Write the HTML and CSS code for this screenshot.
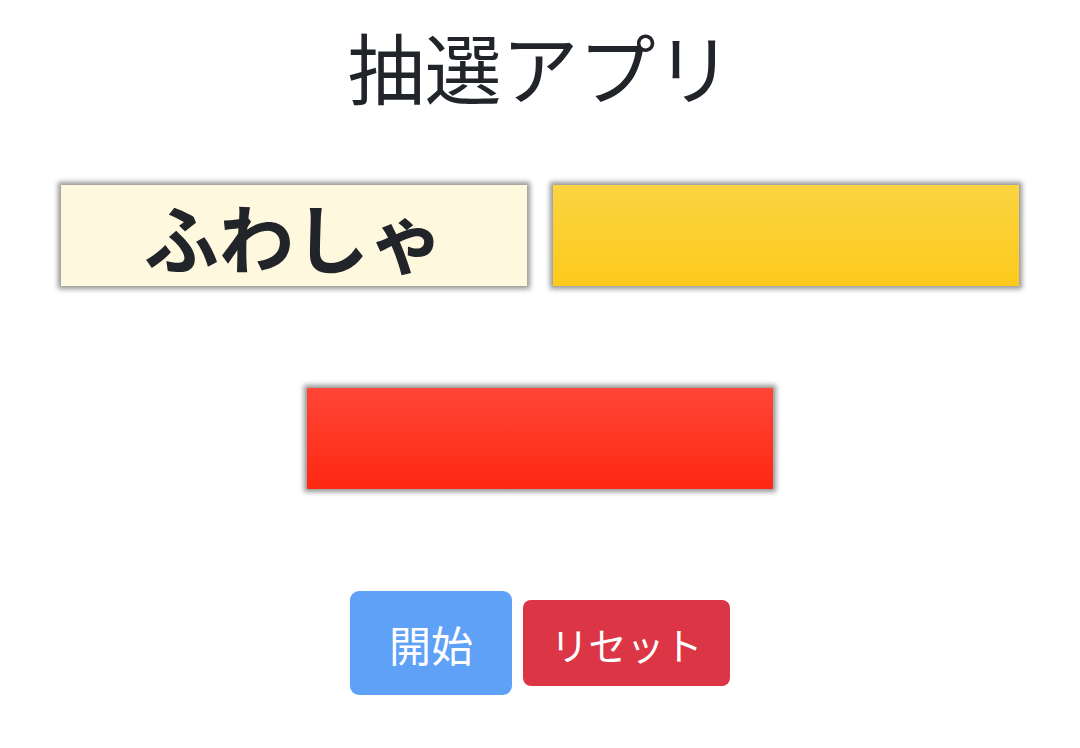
FILE: index.html
```html
<!DOCTYPE html>
<html lang="ja">
<head>
<meta charset="utf-8">
<title>抽選アプリ</title>
<link rel="stylesheet" href="styles.css">
</head>
<body>
<main class="app">
  <h1 class="title">抽選アプリ</h1>
  <div class="row">
    <div class="slot slot-cream">ふわしゃ</div>
    <div class="slot slot-yellow"></div>
  </div>
  <div class="row row-single">
    <div class="slot slot-red"></div>
  </div>
  <div class="actions">
    <button class="btn btn-start">開始</button>
    <button class="btn btn-reset">リセット</button>
  </div>
</main>
</body>
</html>
```

FILE: styles.css
```css
html, body {
  margin: 0;
  padding: 0;
  background: #ffffff;
}
body {
  font-family: "Noto Sans CJK JP", "Noto Sans", sans-serif;
  color: #212529;
}
.app {
  display: flex;
  flex-direction: column;
  align-items: center;
  padding-top: 20px;
}
.title {
  margin: 0;
  font-size: 77px;
  font-weight: 400;
  line-height: 92px;
  letter-spacing: 0;
}
.row {
  display: flex;
  gap: 26px;
  margin-top: 73px;
}
.row-single {
  margin-top: 102px;
}
.slot {
  width: 466px;
  height: 101px;
  box-shadow: 0 0 5px 3px rgba(0, 0, 0, 0.42);
  display: flex;
  align-items: center;
  justify-content: center;
  font-size: 75px;
  font-weight: 700;
  line-height: 1;
}
.slot-cream {
  background: #fef8df;
}
.slot-yellow {
  background: linear-gradient(to bottom, #fbd441, #fcca1c);
}
.slot-red {
  background: linear-gradient(to bottom, #ff4536, #fe2812);
}
.actions {
  display: flex;
  align-items: center;
  gap: 11px;
  margin-top: 102px;
}
.btn {
  border: none;
  color: #ffffff;
  font-family: "Noto Sans CJK JP", "Noto Sans", sans-serif;
  cursor: pointer;
  padding: 0;
}
.btn-start {
  width: 162px;
  height: 104px;
  background: #60a1f8;
  border-radius: 9px;
  font-size: 42px;
}
.btn-reset {
  width: 207px;
  height: 86px;
  background: #dc3545;
  border-radius: 8px;
  font-size: 38px;
}
```
